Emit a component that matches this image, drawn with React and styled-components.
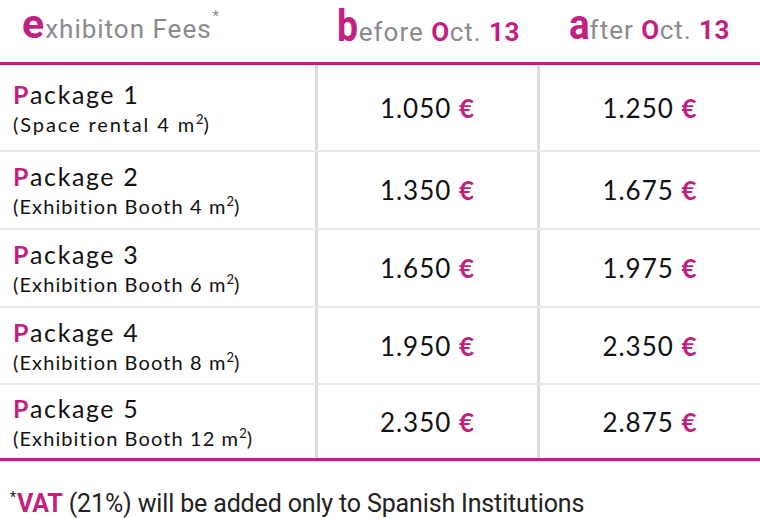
import React from "react";
import styled, { createGlobalStyle } from "styled-components";

const MAGENTA = "#c21f80";
const GRAY = "#8a8a8f";
const COND = `"Roboto", "Liberation Sans", sans-serif`;
const BODY = `"Lato", "Noto Sans", sans-serif`;

const Global = createGlobalStyle`
  html, body { margin: 0; padding: 0; background: #fff; }
  body { font-family: ${BODY}; color: #111; }
`;

const Page = styled.div`
  width: 760px;
  height: 518px;
  overflow: hidden;
  background: #fff;
`;

const Table = styled.div`
  display: flex;
  flex-direction: column;
  border-bottom: 3px solid ${MAGENTA};
`;

const HeaderRow = styled.div`
  display: grid;
  grid-template-columns: 318px 221px 1fr;
  height: 62px;
  border-bottom: 3px solid ${MAGENTA};
`;

const HeadCell = styled.div`
  font-family: ${COND};
  font-size: 26px;
  letter-spacing: 1px;
  color: ${GRAY};
  line-height: 40px;
  height: 62px;
  box-sizing: border-box;
  padding-top: 0;
  padding-left: ${(p) => (p.$left ? "22px" : "0")};
  text-align: ${(p) => (p.$left ? "left" : "center")};
  white-space: nowrap;
`;

const Initial = styled.span`
  color: ${MAGENTA};
  font-weight: 700;
  font-size: 26px;
  letter-spacing: 0.5px;
`;

const BigInitial = styled.span`
  display: inline-block;
  color: ${MAGENTA};
  font-weight: 700;
  font-size: ${(p) => p.$size}px;
  line-height: normal;
  letter-spacing: 0;
  transform: scaleX(${(p) => p.$sx});
  transform-origin: left center;
  margin-right: ${(p) => p.$pull}px;
`;

const Star = styled.span`
  display: inline-block;
  font-size: 15px;
  line-height: 1;
  vertical-align: 17px;
  margin-left: 1px;
`;

const Row = styled.div`
  display: grid;
  grid-template-columns: 315px 222px 1fr;
  height: ${(p) => p.$h}px;
  border-bottom: ${(p) => (p.$last ? "none" : "2px solid #e9e9e9")};
`;

const NameCell = styled.div`
  display: flex;
  flex-direction: column;
  justify-content: center;
  padding-left: 13px;
  padding-top: 0;
`;

const Title = styled.div`
  font-size: 25px;
  letter-spacing: 1.6px;
  line-height: 32px;
  color: #111;
`;

const Sub = styled.div`
  font-size: 20px;
  letter-spacing: ${(p) => p.$ls}px;
  line-height: 28px;
  color: #111;
`;

const Sq = styled.span`
  font-size: 13px;
  vertical-align: 8px;
  line-height: 1;
  letter-spacing: 0;
`;

const Accent = styled.span`
  color: ${MAGENTA};
  font-weight: 700;
`;

const PriceCell = styled.div`
  border-left: 3px solid #dcdcdc;
  display: flex;
  align-items: center;
  justify-content: center;
  font-size: 26px;
  letter-spacing: 1px;
  color: #111;
`;

const Footer = styled.div`
  font-family: ${COND};
  font-size: 25px;
  letter-spacing: -0.15px;
  color: #222;
  padding: 28px 0 0 10px;
  white-space: nowrap;
`;

const FootStar = styled.span`
  display: inline-block;
  font-size: 14px;
  line-height: 1;
  vertical-align: 10px;
  margin-right: 1px;
`;

const rows = [
  { n: 1, sub: "Space rental 4", ls: 1.9, before: "1.050", after: "1.250", h: 85 },
  { n: 2, sub: "Exhibition Booth 4", ls: 1.1, before: "1.350", after: "1.675", h: 76 },
  { n: 3, sub: "Exhibition Booth 6", ls: 1.1, before: "1.650", after: "1.975", h: 76 },
  { n: 4, sub: "Exhibition Booth 8", ls: 1.1, before: "1.950", after: "2.350", h: 75 },
  { n: 5, sub: "Exhibition Booth 12", ls: 1.1, before: "2.350", after: "2.875", h: 73 },
];

export default function App() {
  return (
    <Page>
      <Global />
      <Table>
        <HeaderRow>
          <HeadCell $left>
            <BigInitial $size={41} $sx={1} $pull={1}>
              e
            </BigInitial>
            xhibiton Fees
            <Star>*</Star>
          </HeadCell>
          <HeadCell>
            <BigInitial $size={44} $sx={0.85} $pull={-3}>
              b
            </BigInitial>
            efore <Initial>O</Initial>ct. <Initial>13</Initial>
          </HeadCell>
          <HeadCell>
            <BigInitial $size={42} $sx={0.92} $pull={-2}>
              a
            </BigInitial>
            fter <Initial>O</Initial>ct. <Initial>13</Initial>
          </HeadCell>
        </HeaderRow>
        {rows.map((r, i) => (
          <Row key={r.n} $h={r.h} $last={i === rows.length - 1}>
            <NameCell>
              <Title>
                <Accent>P</Accent>ackage {r.n}
              </Title>
              <Sub $ls={r.ls}>
                ({r.sub} m<Sq>2</Sq>)
              </Sub>
            </NameCell>
            <PriceCell>
              {r.before}&nbsp;<Accent>€</Accent>
            </PriceCell>
            <PriceCell>
              {r.after}&nbsp;<Accent>€</Accent>
            </PriceCell>
          </Row>
        ))}
      </Table>
      <Footer>
        <FootStar>*</FootStar>
        <Accent>VAT</Accent> (21%) will be added only to Spanish Institutions
      </Footer>
    </Page>
  );
}
